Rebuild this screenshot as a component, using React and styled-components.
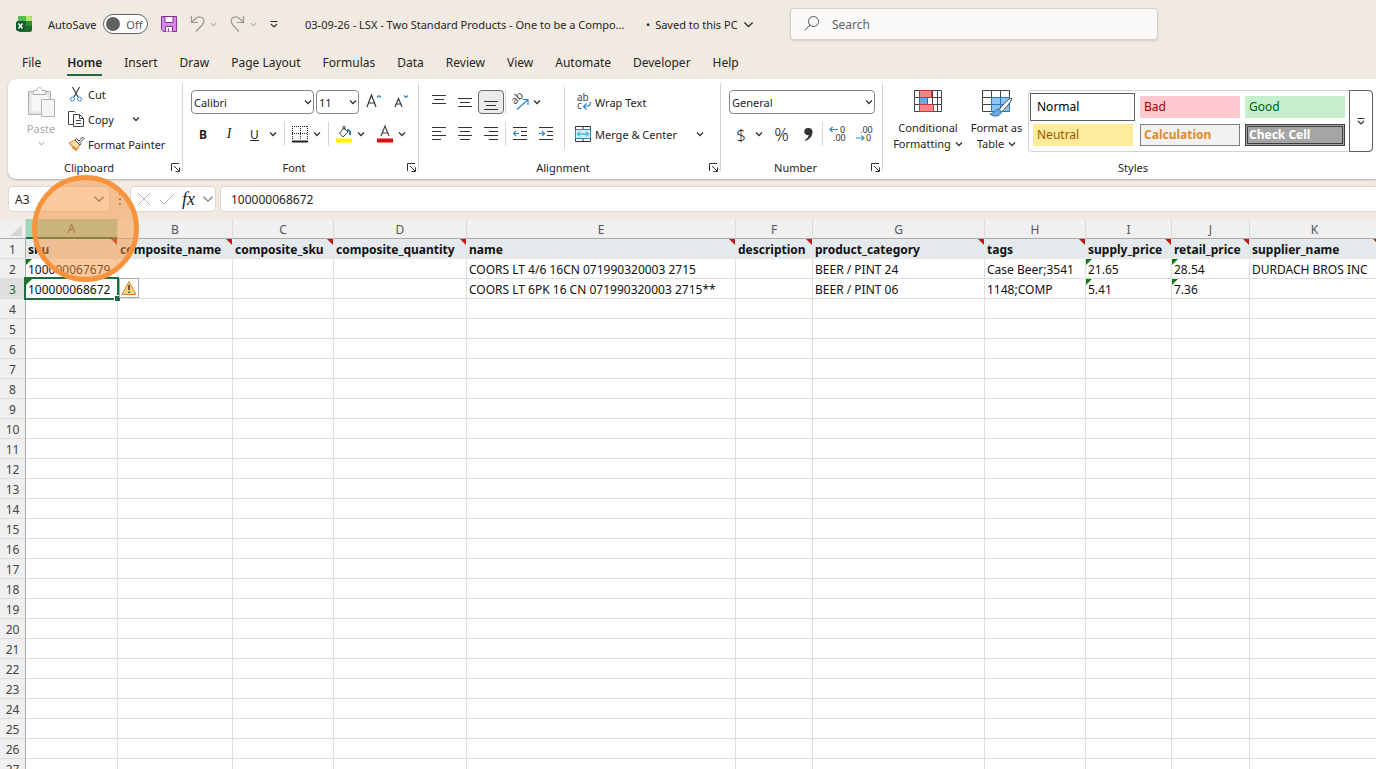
import React from "react";
import styled, { createGlobalStyle } from "styled-components";

const ui = `"Noto Sans", "Open Sans", sans-serif`;

const GlobalStyle = createGlobalStyle`
  * { box-sizing: border-box; }
  body {
    margin: 0;
    background: #f1eae1;
    font-family: ${ui};
    font-size: 12px;
    color: #242424;
  }
  button, input, select { font: inherit; color: inherit; }
  svg { display: block; flex: none; overflow: visible; }
`;

const Page = styled.div`
  height: 100vh;
  display: flex;
  flex-direction: column;
  overflow: hidden;
  position: relative;
`;

const Row = styled.div`
  display: flex;
  align-items: center;
  height: ${(p) => p.$h || 32}px;
  gap: ${(p) => p.$gap || 0}px;
`;

const Plain = styled.button`
  border: 0;
  padding: 0;
  background: transparent;
  display: flex;
  align-items: center;
  justify-content: center;
  gap: 4px;
  white-space: nowrap;
`;

/* title bar */
const TitleBar = styled.header`
  display: grid;
  flex: none;
  grid-template-columns: 284px 484px 368px 1fr;
  align-items: center;
  height: 48px;
  padding-left: 16px;
  column-gap: 3px;
  font-size: 11px;
`;

const QuickAccess = styled.div`
  display: flex;
  align-items: center;
`;

const AutoSave = styled.label`
  display: flex;
  align-items: center;
  gap: 7px;
  margin: 0 13px 0 16px;
`;

const Toggle = styled.span`
  position: relative;
  width: 45px;
  height: 20px;
  border: 1px solid #616161;
  border-radius: 10px;
  background: #fff;
  display: flex;
  align-items: center;
  justify-content: space-between;
  padding: 0 5px 0 2px;
  color: #555;

  &::before {
    content: "";
    width: 14px;
    height: 14px;
    border-radius: 50%;
    background: #616161;
  }

  input {
    position: absolute;
    inset: 0;
    margin: 0;
    opacity: 0;
  }
`;

const DocTitle = styled(Plain)`
  justify-content: flex-start;
  gap: 5px;
  padding-left: 2px;

  span:first-child {
    min-width: 336px;
    text-align: left;
  }
`;

const Search = styled.label`
  display: flex;
  align-items: center;
  gap: 12px;
  height: 32px;
  padding: 0 13px;
  border: 1px solid #d5cfc8;
  border-radius: 4px;
  background: #fbfaf9;
  box-shadow: 0 1px 2px rgba(0, 0, 0, 0.12);

  input {
    flex: 1;
    min-width: 0;
    border: 0;
    outline: 0;
    padding: 0;
    background: transparent;
    font-size: 12px;
  }
  input::placeholder { color: #616161; opacity: 1; }
`;

/* ribbon tabs */
const Tabs = styled.nav`
  display: flex;
  flex: none;
  align-items: center;
  gap: 22px;
  height: 31px;
  padding-left: 22px;
`;

const Tab = styled.button`
  height: 24px;
  padding: 0;
  border: 0;
  border-bottom: 2px solid ${(p) => (p.$active ? "#1d6b40" : "transparent")};
  background: transparent;
  font-weight: ${(p) => (p.$active ? 600 : 400)};
  line-height: 22px;

  &:first-child { margin-right: 4px; }
`;

/* ribbon */
const Ribbon = styled.section`
  display: flex;
  flex: none;
  height: 100px;
  margin-left: 8px;
  background: #fff;
  border-radius: 8px 0 0 8px;
  box-shadow: 0 1px 2px rgba(0, 0, 0, 0.25);
`;

const Group = styled.div`
  flex: ${(p) => (p.$grow ? "1 0 auto" : "none")};
  width: ${(p) => p.$w}px;
  display: flex;
  flex-direction: column;
  padding: ${(p) => p.$pad || "7px 0 0 8px"};
  background: ${(p) =>
    p.$last ? "none" : "linear-gradient(#d4d4d4, #d4d4d4) right 4px / 1px 88px no-repeat"};
  background-position: right 4px;
`;

const GroupBody = styled.div`
  flex: 1;
  display: flex;
  min-height: 0;
`;

const Stack = styled.div`
  display: flex;
  flex-direction: column;
`;

const GroupFooter = styled.div`
  display: grid;
  flex: none;
  grid-template-columns: ${(p) => (p.$wide ? "1fr" : "1fr 10px")};
  align-items: center;
  height: 23px;
  margin-left: ${(p) => (p.$wide ? 0 : -8)}px;
  padding-right: ${(p) => (p.$wide ? 0 : 3)}px;
  font-size: 11px;
  text-align: center;
`;

const Tool = styled(Plain)`
  width: ${(p) => p.$w || 26}px;
  height: 24px;
  border: 1px solid ${(p) => (p.$on ? "#6b6b6b" : "transparent")};
  border-radius: 4px;
  background: ${(p) => (p.$on ? "#ebebeb" : "transparent")};
  font-size: ${(p) => p.$size || 12}px;
  font-weight: ${(p) => (p.$light ? 300 : 400)};
`;

const Italic = styled.em`
  font-family: "Liberation Serif", serif;
  font-size: ${(p) => p.$size || 14}px;
`;

const Pair = styled.span`
  display: flex;
  align-items: center;
  gap: 5px;
  margin-left: ${(p) => p.$ml || 0}px;
`;

const TextTool = styled(Plain)`
  justify-content: flex-start;
  height: ${(p) => p.$h || 26}px;
  font-size: 11px;
`;

const ClipStack = styled(Stack)`
  margin-left: 2px;
`;

const BigTool = styled(Plain)`
  flex-direction: column;
  justify-content: flex-start;
  gap: ${(p) => p.$gap || 6}px;
  width: ${(p) => p.$w}px;
  padding-top: ${(p) => p.$top || 3}px;
  line-height: 16px;
  font-size: 11px;
  color: ${(p) => (p.$off ? "#ababab" : "#242424")};

  span {
    display: flex;
    align-items: center;
    justify-content: center;
    gap: 4px;
  }
`;

const Rule = styled.i`
  width: 1px;
  height: ${(p) => p.$h || 24}px;
  margin: 0 ${(p) => p.$r ?? (p.$m || 0)}px 0 ${(p) => p.$m || 0}px;
  background: #d4d4d4;
`;

const Pick = styled.span`
  position: relative;
  width: ${(p) => p.$w}px;
  height: 24px;

  select {
    appearance: none;
    width: 100%;
    height: 100%;
    padding: 0 12px 0 2px;
    border: 1px solid #858585;
    border-radius: 4px;
    background: #fff;
    font-size: 11px;
  }
  svg {
    position: absolute;
    right: 2px;
    top: 8px;
    pointer-events: none;
  }
`;

const Gallery = styled.div`
  display: flex;
  width: 345px;
  height: 62px;
  margin: 4px 0 0 1px;
  border: 1px solid #d0d0d0;
  border-radius: 4px;
`;

const Swatches = styled.div`
  flex: 1;
  display: grid;
  grid-template-columns: 105px 100px 100px;
  grid-template-rows: 28px 24px;
  column-gap: 5px;
  row-gap: 2px;
  padding: 2px 0 0 1px;
  align-items: center;
`;

const Swatch = styled.button`
  height: ${(p) => (p.$selected ? 28 : 22)}px;
  margin: 0 ${(p) => (p.$inset ? 2 : 0)}px 0 ${(p) => p.$inset || 0}px;
  padding: 0 0 0 ${(p) => p.$pad || 4}px;
  border: ${(p) => p.$border || "0"};
  background: ${(p) => p.$bg};
  color: ${(p) => p.$fg};
  font-weight: ${(p) => (p.$bold ? 700 : 400)};
  line-height: 16px;
  text-align: left;
`;

const More = styled(Plain)`
  width: 24px;
  height: 62px;
  margin: -1px -1px 0 0;
  border: 1px solid #616161;
  border-radius: 0 4px 4px 0;
`;

/* formula bar */
const FormulaBar = styled.div`
  display: flex;
  flex: none;
  align-items: center;
  height: 40px;
  padding-left: 8px;
`;

const Box = styled.div`
  display: flex;
  flex: ${(p) => (p.$w ? "none" : 1)};
  width: ${(p) => (p.$w ? `${p.$w}px` : "auto")};
  align-items: center;
  justify-content: space-between;
  height: 26px;
  margin-left: ${(p) => (p.$w ? 0 : 4)}px;
  padding: 0 ${(p) => p.$pr ?? 4}px 0 ${(p) => p.$pad || 6}px;
  border: 1px solid #dcd7d0;
  border-right-width: ${(p) => (p.$w ? 1 : 0)}px;
  border-radius: ${(p) => (p.$w ? "4px" : "4px 0 0 4px")};
  background: #fff;

  input {
    flex: 1;
    min-width: 0;
    padding: 0;
    border: 0;
    outline: 0;
    background: transparent;
  }
`;

/* sheet */
const Sheet = styled.table`
  table-layout: fixed;
  border-collapse: separate;
  border-spacing: 0;
  width: max(100%, 1380px);
  flex: none;
  background: #fff;
  font-size: 12px;
  color: #111;
`;

const ColHead = styled.th`
  height: 20px;
  padding: ${(p) => (p.$on ? 1 : 2)}px 0 0;
  border-right: 1px solid #dadada;
  border-bottom: ${(p) => (p.$on ? "2px solid #1d6b40" : "1px solid #ababab")};
  background: ${(p) => (p.$on ? "#9fd5b9" : "#f0f0f0")};
  color: #555;
  font-weight: 400;
  line-height: 17px;
`;

const RowHead = styled.th`
  height: 20px;
  padding: 2px 0 0;
  border-right: 1px solid ${(p) => (p.$on ? "#1d6b40" : "#ababab")};
  border-bottom: 1px solid #dedede;
  background: ${(p) => (p.$on ? "#dfdfdf" : "#f0f0f0")};
  color: ${(p) => (p.$on ? "#1d6b40" : "#444")};
  font-weight: 400;
  line-height: 17px;
`;

const Cell = styled.td`
  position: relative;
  height: 20px;
  padding: 2px 0 0 2px;
  border-right: 1px solid ${(p) => (p.$head ? "#e4e9ec" : "#dedede")};
  border-bottom: 1px solid ${(p) => (p.$head ? "#e4e9ec" : "#dedede")};
  background: ${(p) => (p.$head ? "#e4e9ec" : "#fff")};
  font-weight: ${(p) => (p.$head ? 700 : 400)};
  line-height: 17px;
  white-space: nowrap;
`;

const Note = styled.i`
  position: absolute;
  top: 0;
  right: 0;
  border-top: 6px solid #c81414;
  border-left: 6px solid transparent;
`;

const Flag = styled.i`
  position: absolute;
  top: 0;
  left: 0;
  border-top: 6px solid #127a12;
  border-right: 6px solid transparent;
`;

const Selection = styled.div`
  position: absolute;
  z-index: 1;
  inset: -2px;
  border: 2px solid #1d6b40;

  &::after {
    content: "";
    position: absolute;
    right: -3px;
    bottom: -3px;
    width: 5px;
    height: 5px;
    background: #1d6b40;
    outline: 1px solid #fff;
  }
`;

const Warning = styled.button`
  position: absolute;
  z-index: 2;
  left: 93px;
  top: -1px;
  width: 20px;
  height: 20px;
  padding: 1px;
  border: 1px solid #ababab;
  background: #fff;
`;

const ClickMark = styled.div`
  position: absolute;
  z-index: 3;
  left: 32px;
  top: 175px;
  width: 107px;
  height: 107px;
  border: 5px solid #f8933d;
  border-radius: 50%;
  background: rgba(248, 147, 61, 0.5);
  pointer-events: none;
`;

const Chevron = ({ size = 8, color = "#333", width = 1.3 }) => (
  <svg width={size} height={size} viewBox="0 0 8 8" fill="none" stroke={color} strokeWidth={width}>
    <path d="M1 2.5 4 5.5 7 2.5" />
  </svg>
);

const Icon = ({ w = 16, h = w, color = "#444", sw = 1, children }) => (
  <svg width={w} height={h} viewBox={`0 0 ${w} ${h}`} fill="none" stroke={color} strokeWidth={sw}>
    {children}
  </svg>
);

const MoreIcon = () => (
  <Icon w={8} color="#333" sw={1.2}>
    <path d="M0.5 1.5h7M1 4 4 7l3-3" />
  </Icon>
);

const Launcher = () => (
  <Plain aria-label="More options">
    <Icon w={9} color="#333">
      <path d="M0.5 8V.5H8M3 3l5 5M8.5 4.5v4h-4" />
    </Icon>
  </Plain>
);

const Lines = ({ rows }) => (
  <Icon color="#333">
    {rows.map(([x, y, w]) => (
      <path key={y} d={`M${x} ${y}.5h${w}`} />
    ))}
  </Icon>
);

const columns = [
  ["A", 92, "sku", "100000067679", "100000068672"],
  ["B", 115, "composite_name"],
  ["C", 101, "composite_sku"],
  ["D", 133, "composite_quantity"],
  ["E", 269, "name", "COORS LT 4/6 16CN 071990320003 2715", "COORS LT 6PK 16 CN 071990320003 2715**"],
  ["F", 77, "description"],
  ["G", 172, "product_category", "BEER / PINT 24", "BEER / PINT 06"],
  ["H", 101, "tags", "Case Beer;3541", "1148;COMP"],
  ["I", 86, "supply_price", "21.65", "5.41"],
  ["J", 78, "retail_price", "28.54", "7.36"],
  ["K", null, "supplier_name", "DURDACH BROS INC"],
];

const flagged = ["A", "I", "J"];
const tabs = ["File", "Home", "Insert", "Draw", "Page Layout", "Formulas", "Data", "Review", "View", "Automate", "Developer", "Help"];

function Title() {
  return (
    <TitleBar>
      <QuickAccess>
        <svg width="16" height="16" viewBox="0 0 16 16">
          <rect x="2" width="14" height="16" rx="2" fill="#1f6b2c" />
          <path d="M4 0h6v5H2V2a2 2 0 0 1 2-2z" fill="#4fbf4f" />
          <path d="M10 0h4a2 2 0 0 1 2 2v3h-6z" fill="#b5e66b" />
          <path d="M10 5h6v5h-6z" fill="#2f8a35" />
          <rect y="5" width="9" height="10" rx="2" fill="#0d5a2a" />
          <path d="M2.5 7.5 6.5 12.5M6.5 7.5 2.5 12.5" stroke="#fff" strokeWidth="1.5" />
        </svg>
        <AutoSave>
          AutoSave
          <Toggle>
            <input type="checkbox" />
            Off
          </Toggle>
        </AutoSave>
        <Row $h={24} $gap={13}>
          <Plain aria-label="Save">
            <Icon color="#8a2f9b">
              <path d="M.5.5h15v15h-13l-2-2z" fill="#d48be0" />
              <path d="M4 .5h8v6H4zM4.5 15.5v-5h7v5" fill="#fff" />
              <path d="M7.5 12.5v3" />
            </Icon>
          </Plain>
          <Row $h={24} $gap={5}>
            <Plain aria-label="Undo">
              <Icon w={15} h={16} color="#9a9690" sw={1.2}>
                <path d="M1.5 0v6.5H8M1.5 6.5 5.5 2.5c3-3 7.5-1.5 8.3 1.5.5 2-.3 3.5-1.6 5L6 15.5" />
              </Icon>
            </Plain>
            <Chevron size={7} color="#b3afa9" />
          </Row>
          <Row $h={24} $gap={5}>
            <Plain aria-label="Redo">
              <Icon w={15} h={16} color="#9a9690" sw={1.2}>
                <path d="M13.5 0v6.5H7M13.5 6.5 9.5 2.5C6.500-.5 2 1 1.200 4c-.5 2 .3 3.5 1.600 5L9 15.5" />
              </Icon>
            </Plain>
            <Chevron size={7} color="#b3afa9" />
          </Row>
          <Plain aria-label="Customize">
            <MoreIcon />
          </Plain>
        </Row>
      </QuickAccess>
      <DocTitle>
        <span>03-09-26 - LSX - Two Standard Products - One to be a Compo...</span>
        <span>•</span>
        <span>Saved to this PC</span>
        <Chevron size={11} width={1} />
      </DocTitle>
      <Search>
        <Icon color="#555">
          <circle cx="9.5" cy="5.5" r="5" />
          <path d="M6 9 .8 14.5" />
        </Icon>
        <input placeholder="Search" aria-label="Search" />
      </Search>
    </TitleBar>
  );
}

function Clipboard() {
  return (
    <Group $w={175} $pad="3px 0 0 8px">
      <GroupBody>
        <BigTool $w={50} $off $top={5} $gap={3}>
          <Icon w={30} h={31} color="#b0b0b0">
            <path d="M2.5 4.5h22v23h-22z" fill="#e4e4e4" />
            <path d="M5.5 7.5h16v17h-16z" fill="#f7f7f7" stroke="none" />
            <path d="M7.5 7.5v-4h3.500c0-4 5-4 5 0h3.500v4z" fill="#fff" />
            <path d="M15.5 12.5h13v17h-13z" fill="#f5f5f5" />
          </Icon>
          <span>Paste</span>
          <Chevron size={7} color="#b5b5b5" />
        </BigTool>
        <ClipStack>
          <TextTool $h={25}>
            <Icon>
              <path d="M4.5 1 10 11M11.5 1 6 11" strokeWidth="1.2" />
              <circle cx="4.5" cy="13" r="2" stroke="#2b88c8" />
              <circle cx="11.5" cy="13" r="2" stroke="#2b88c8" />
            </Icon>
            Cut
          </TextTool>
          <Row $h={26} $gap={18}>
            <TextTool>
              <Icon>
                <path d="M5 13.5H.5V.5h6l1 1" />
                <path d="M5.5 3.5h6l4 4v8h-10zM11.5 3.5v4h4M8 9.5h5M8 12.5h5" />
              </Icon>
              Copy
            </TextTool>
            <Chevron />
          </Row>
          <TextTool $h={25}>
            <Icon>
              <path d="M1 7 7 4l5 5-4 6z" fill="#fbd9a6" stroke="#d9822b" />
              <path d="m3 9 6 4M4 12l5 1" stroke="#d9822b" />
              <path d="m7 4 1.5-1.5L11 5l3.5-4L16 2.5 12 6.5l1 1L12 9z" fill="#fff" />
            </Icon>
            Format Painter
          </TextTool>
        </ClipStack>
      </GroupBody>
      <GroupFooter>
        Clipboard
        <Launcher />
      </GroupFooter>
    </Group>
  );
}

function FontGroup() {
  return (
    <Group $w={236} $pad="7px 0 0 7px">
      <GroupBody>
        <Stack>
          <Row $gap={2}>
            <Pair $ml={1}>
              <Pick $w={123}>
                <select aria-label="Font"><option>Calibri</option></select>
                <Chevron />
              </Pick>
            </Pair>
            <Pick $w={43}>
              <select aria-label="Font size"><option>11</option></select>
              <Chevron />
            </Pick>
            <Tool $w={25} aria-label="Increase font size">
              <Icon color="#333" sw={1.2}>
                <path d="M1 13 5.5 1 10 13M2.5 9h6" />
                <path d="m11 3.5 2-2 2 2" stroke="#2b88c8" />
              </Icon>
            </Tool>
            <Tool $w={25} aria-label="Decrease font size">
              <Icon color="#333" sw={1.2}>
                <path d="M2 13 5.5 4.5 9 13M3 10h5" />
                <path d="m11 1.5 2 2 2-2" stroke="#2b88c8" />
              </Icon>
            </Tool>
          </Row>
          <Row>
            <Tool><b>B</b></Tool>
            <Tool><Italic>I</Italic></Tool>
            <Tool $w={25}><u>U</u></Tool>
            <Pair $ml={2}><Chevron /></Pair>
            <Rule $m={7} />
            <Pair>
              <Icon color="#222">
                <path d="M0 .5h16M0 7.5h16M.5 0v14M8.5 0v14M15.5 0v14" strokeDasharray="1 1" shapeRendering="crispEdges" />
                <path d="M0 15.5h16" strokeWidth="2" />
              </Icon>
              <Chevron />
            </Pair>
            <Rule $m={7} />
            <Pair>
              <Icon>
                <path d="M3.5 7 8 2l4 4-5 5z" fill="#f7f7f7" />
                <path d="M7 3V.5h2V4" />
                <path d="M11 4c3 0 3.5 2 3 5" stroke="#2b6fa8" strokeWidth="2" />
                <path d="M0 14.5h16" stroke="#fff200" strokeWidth="4" />
              </Icon>
              <Chevron />
            </Pair>
            <Pair $ml={12}>
              <Icon>
                <path d="M4 10 8 0l4 10M5.5 7h5" strokeWidth="1.2" />
                <path d="M0 14.5h16" stroke="#dd0d0d" strokeWidth="4" />
              </Icon>
              <Chevron />
            </Pair>
          </Row>
        </Stack>
      </GroupBody>
      <GroupFooter>
        Font
        <Launcher />
      </GroupFooter>
    </Group>
  );
}

function Alignment() {
  return (
    <Group $w={302} $pad="7px 0 0 7px">
      <GroupBody>
        <Stack>
          <Row>
            <Tool aria-label="Top align"><Lines rows={[[1, 1, 14], [3, 5, 10], [1, 9, 14]]} /></Tool>
            <Tool aria-label="Middle align"><Lines rows={[[1, 4, 14], [3, 8, 10], [1, 12, 14]]} /></Tool>
            <Tool aria-label="Bottom align" $on><Lines rows={[[1, 7, 14], [3, 11, 10], [1, 15, 14]]} /></Tool>
            <Rule $m={1} />
            <Tool aria-label="Orientation">
              <Icon>
                <text transform="translate(3 11) rotate(-45)" fontSize="11" fill="#444" stroke="none">ab</text>
                <path d="M5 15.500 15.5 6M10.5 5.5H16V11" stroke="#2b88c8" strokeWidth="1.2" />
              </Icon>
            </Tool>
            <Chevron />
          </Row>
          <Row>
            <Tool aria-label="Align left"><Lines rows={[[1, 1, 14], [1, 5, 9], [1, 9, 14], [1, 13, 9]]} /></Tool>
            <Tool aria-label="Center"><Lines rows={[[1, 1, 14], [3, 5, 10], [1, 9, 14], [3, 13, 10]]} /></Tool>
            <Tool aria-label="Align right"><Lines rows={[[1, 1, 14], [6, 5, 9], [1, 9, 14], [6, 13, 9]]} /></Tool>
            <Rule $m={1} />
            <Tool aria-label="Decrease indent">
              <Icon color="#333">
                <path d="M1 1.5h14M9 5.5h6M9 9.5h6M1 13.5h14" />
                <path d="M7 7.5H1.5M4 5 1.5 7.5 4 10" stroke="#2b88c8" strokeWidth="1.2" />
              </Icon>
            </Tool>
            <Tool aria-label="Increase indent">
              <Icon color="#333">
                <path d="M1 1.5h14M9 5.5h6M9 9.5h6M1 13.5h14" />
                <path d="M1 7.5h5.5M4 5l2.5 2.5L4 10" stroke="#2b88c8" strokeWidth="1.2" />
              </Icon>
            </Tool>
          </Row>
        </Stack>
        <Row $h={64}>
          <Rule $h={62} $m={5} $r={10} />
          <Stack>
            <Row>
              <TextTool>
                <Icon>
                  <text x="2" y="7" fontSize="10" fill="#444" stroke="none">ab</text>
                  <text x="2" y="15" fontSize="10" fill="#444" stroke="none">c</text>
                  <path d="M15.5 8c0 4-2 4.5-6.5 4.5M11.5 9.5 8.5 12.5l3 3" stroke="#2b88c8" strokeWidth="1.2" />
                </Icon>
                Wrap Text
              </TextTool>
            </Row>
            <Row $gap={19}>
              <TextTool>
                <Icon color="#333">
                  <path d="M.5.5h15v15H.5zM8 .5v3M8 12.5v3" />
                  <path d="M.5 3.5h15v9H.5z" fill="#d6ecf9" stroke="#2b88c8" />
                  <path d="M3 8h10M5 5.5 2.5 8 5 10.5M11 5.5 13.5 8 11 10.5" stroke="#2b88c8" />
                </Icon>
                Merge &amp; Center
              </TextTool>
              <Chevron />
            </Row>
          </Stack>
        </Row>
      </GroupBody>
      <GroupFooter>
        Alignment
        <Launcher />
      </GroupFooter>
    </Group>
  );
}

const Decimals = ({ less }) => (
  <Icon w={16} h={16}>
    <text x={less ? 4 : 10} y="7" fontSize="9" fill="#333" stroke="none">{less ? ".00" : "0"}</text>
    <text x={less ? 10 : 3} y="15" fontSize="9" fill="#333" stroke="none">{less ? "0" : ".00"}</text>
    {less ? (
      <path d="M0 12h8M5.5 9.5 8 12l-2.5 2.5" stroke="#2b88c8" strokeWidth="1.2" />
    ) : (
      <path d="M8 3.5H0M2.5 1 0 3.5 2.5 6" stroke="#2b88c8" strokeWidth="1.2" />
    )}
  </Icon>
);

function NumberGroup() {
  return (
    <Group $w={162}>
      <GroupBody>
        <Stack>
          <Row>
            <Pick $w={146}>
              <select aria-label="Number format"><option>General</option></select>
              <Chevron />
            </Pick>
          </Row>
          <Row>
            <Tool $w={24} $size={17} $light>$</Tool>
            <Pair $ml={2}><Chevron /></Pair>
            <Tool $w={37} $size={18} $light>%</Tool>
            <Tool $w={17} aria-label="Comma style">
              <svg width="9" height="13" viewBox="0 0 9 13">
                <path d="M4.5 0a3.8 3.8 0 0 1 4 4c0 4-3 7.5-7 9l-.5-1c2-1.5 3.5-3 3.8-5A3.6 3.6 0 1 1 4.5 0z" fill="#333" />
              </svg>
            </Tool>
            <Rule $m={5} $r={2} />
            <Tool aria-label="Increase decimal"><Decimals /></Tool>
            <Tool aria-label="Decrease decimal"><Decimals less /></Tool>
          </Row>
        </Stack>
      </GroupBody>
      <GroupFooter>
        Number
        <Launcher />
      </GroupFooter>
    </Group>
  );
}

function Styles() {
  return (
    <Group $w={493} $pad="7px 0 0 7px" $grow $last>
      <GroupBody>
        <BigTool $w={76} $top={4}>
          <Icon w={30} h={24} color="#444">
            <path d="M1.5.5h27v21h-27zM6.5.5v21M12.5.5v21M19.5.5v21M24.5.5v21M1.5 7.5h27M1.5 14.5h27" fill="#fff" />
            <path d="M6.5.5h12v7h-12z" fill="#f98686" stroke="#d13438" />
            <path d="M6.5 7.5h8v7h-8z" fill="#6ea8e0" stroke="#2b6fa8" />
            <path d="M6.5 14.5h14v7h-14z" fill="#f98686" stroke="#d13438" />
          </Icon>
          <div>
            Conditional
            <span>Formatting <Chevron /></span>
          </div>
        </BigTool>
        <BigTool $w={61} $top={4}>
          <Icon w={30} h={24} color="#444">
            <path d="M.5.5h27v21H.5zM9.5.5v21M18.5.5v21M.5 7.5h27M.5 14.5h27" fill="#fff" />
            <path d="M9.5 7.5h18v14h-18z" fill="#8ec4f0" stroke="#2b78c8" />
            <path d="M18.5 7.5v14M9.5 14.5h18" stroke="#2b78c8" />
            <path d="M29 8c-4 2-9 8-12 12l2.5 2C23 19 28 13 30 9z" fill="#fff" />
            <path d="M17 19c-4 0-4 4-9 5 3 3 10 3 11.5-2z" fill="#6ea8e0" stroke="#2b6fa8" />
          </Icon>
          <div>
            Format as
            <span>Table <Chevron /></span>
          </div>
        </BigTool>
        <Gallery>
          <Swatches>
            <Swatch $selected $bg="#fff" $fg="#000" $border="1px solid #616161" $pad={6}>Normal</Swatch>
            <Swatch $bg="#ffc7ce" $fg="#9c0006">Bad</Swatch>
            <Swatch $bg="#c6efce" $fg="#006100">Good</Swatch>
            <Swatch $bg="#ffeb9c" $fg="#9c5700" $inset={3}>Neutral</Swatch>
            <Swatch $bg="#f2f2f2" $fg="#e08a2e" $bold $border="1px solid #7f7f7f" $pad={3}>Calculation</Swatch>
            <Swatch $bg="#a5a5a5" $fg="#fff" $bold $border="3px double #3f3f3f" $pad={1}>Check Cell</Swatch>
          </Swatches>
          <More aria-label="More styles"><MoreIcon /></More>
        </Gallery>
      </GroupBody>
      <GroupFooter $wide>Styles</GroupFooter>
    </Group>
  );
}

function Formula() {
  return (
    <FormulaBar>
      <Box $w={102}>
        <input aria-label="Name box" defaultValue="A3" />
        <Chevron size={12} color="#666" width={0.8} />
      </Box>
      <Icon w={20}>
        <path d="M10 4v2M10 9v2M10 14v2" stroke="#777" strokeWidth="2" />
      </Icon>
      <Box $w={86} $pad={5} $pr={1}>
        <Icon color="#b5b5b5"><path d="m2 2 12 12M14 2 2 14" /></Icon>
        <Icon color="#b5b5b5"><path d="m1 9 4 4L15 3" /></Icon>
        <Italic $size={18}>fx</Italic>
        <Chevron size={12} color="#777" width={0.8} />
      </Box>
      <Box $pad={10}>
        <input aria-label="Formula" defaultValue="100000068672" />
      </Box>
    </FormulaBar>
  );
}

function Grid() {
  const rows = Array.from({ length: 27 }, (_, i) => i + 1);
  return (
    <Sheet>
      <colgroup>
        <col style={{ width: 26 }} />
        {columns.map(([name, width]) => (
          <col key={name} style={{ width: width || "auto" }} />
        ))}
      </colgroup>
      <thead>
        <tr>
          <ColHead aria-label="Select all">
            <svg width="25" height="17" viewBox="0 0 25 17"><path d="M22 4v11H10z" fill="#d6d6d6" /></svg>
          </ColHead>
          {columns.map(([name]) => (
            <ColHead key={name} $on={name === "A"}>{name}</ColHead>
          ))}
        </tr>
      </thead>
      <tbody>
        {rows.map((row) => (
          <tr key={row}>
            <RowHead $on={row === 3}>{row}</RowHead>
            {columns.map((col) => {
              const text = col[row + 1];
              return (
                <Cell key={col[0]} $head={row === 1}>
                  {row <= 3 && text}
                  {row === 1 && <Note />}
                  {(row === 2 || row === 3) && text && flagged.includes(col[0]) && <Flag />}
                  {row === 3 && col[0] === "A" && (
                    <>
                      <Selection />
                      <Warning aria-label="Number stored as text">
                        <Icon color="#d9822b">
                          <path d="M8 1.5 15 14.5H1z" fill="#fbd57a" />
                          <path d="M8 5v5M8 11.5v1.5" stroke="#333" strokeWidth="1.5" />
                        </Icon>
                      </Warning>
                    </>
                  )}
                </Cell>
              );
            })}
          </tr>
        ))}
      </tbody>
    </Sheet>
  );
}

export default function App() {
  return (
    <Page>
      <GlobalStyle />
      <Title />
      <Tabs>
        {tabs.map((tab) => (
          <Tab key={tab} $active={tab === "Home"}>{tab}</Tab>
        ))}
      </Tabs>
      <Ribbon>
        <Clipboard />
        <FontGroup />
        <Alignment />
        <NumberGroup />
        <Styles />
      </Ribbon>
      <Formula />
      <Grid />
      <ClickMark />
    </Page>
  );
}
